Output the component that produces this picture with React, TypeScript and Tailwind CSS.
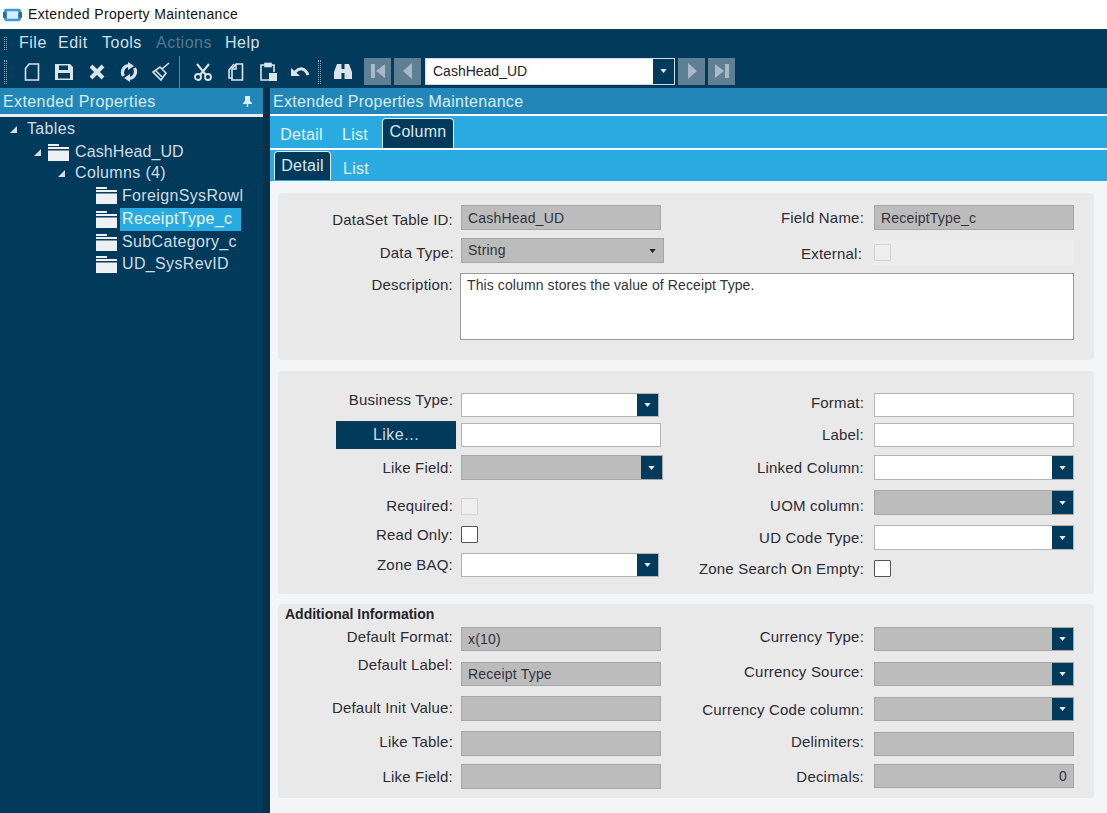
import type { ReactNode } from 'react'

const FONT = 'font-["Liberation_Sans",Arial,sans-serif]'

function Grip({ h }: { h: string }) {
  return <div className={`${h} w-[3px] border-x border-dotted border-[#8fa6b5]`} />
}

function ToolIcon({ w, children }: { w: string; children: ReactNode }) {
  return (
    <div className={`${w} flex h-[32px] shrink-0 items-center justify-center`}>
      <svg viewBox="0 0 20 20" width="20" height="20" fill="none" stroke="#dbe4ea" strokeWidth="1.6">
        {children}
      </svg>
    </div>
  )
}

function NavButton({ dir, end }: { dir: 'l' | 'r'; end?: boolean }) {
  return (
    <div className="flex h-[27px] w-[27px] shrink-0 items-center justify-center bg-[#5f7f94]">
      <svg viewBox="0 0 20 20" width="20" height="20" fill="#a9bac6">
        {dir === 'l' ? <polygon points={end ? '17,3 17,17 8,10' : '14,2 14,18 5,10'} /> : <polygon points={end ? '3,3 3,17 12,10' : '6,2 6,18 15,10'} />}
        {end && <rect x={dir === 'l' ? 3 : 13} y="3" width="4" height="14" />}
      </svg>
    </div>
  )
}

function Arrow() {
  return (
    <div className="flex h-full w-[21px] shrink-0 items-center justify-center bg-[#023a5c]">
      <svg viewBox="0 0 8 5" width="7" height="4" fill="#e6edf2">
        <polygon points="0,0 8,0 4,5" />
      </svg>
    </div>
  )
}

function TreeArrow() {
  return (
    <svg viewBox="0 0 7 7" width="7" height="7" fill="#d3dce2" className="shrink-0">
      <polygon points="7,0 7,7 0,7" />
    </svg>
  )
}

function FolderIcon() {
  return (
    <svg viewBox="0 0 21 17" width="21" height="17" fill="#eef1f3" className="shrink-0">
      <rect x="0" y="0" width="11" height="2" />
      <rect x="0" y="3" width="21" height="2" />
      <rect x="0" y="6.5" width="21" height="10.5" />
    </svg>
  )
}

function Label({ children }: { children: ReactNode }) {
  return <span className="-translate-y-[1px] whitespace-nowrap text-[15px] leading-none tracking-[0.2px] text-[#2c2c34]">{children}</span>
}

type FieldProps = {
  label: string
  w?: string
  h?: string
  value?: string
  gray?: boolean
  drop?: boolean
  right?: boolean
  className?: string
  labelClass?: string
}

function Field({ label, w = 'w-[200px]', h = 'h-[25px]', value, gray, drop, right, className = '', labelClass = 'pr-[8px]' }: FieldProps) {
  return (
    <div className={`flex items-center ${h} ${className}`}>
      <div className={`flex w-full flex-1 justify-end ${labelClass}`}>
        <Label>{label}</Label>
      </div>
      <div
        className={`flex h-full shrink-0 items-center justify-between border ${w} ${
          gray ? 'border-[#a6a6a6] bg-[#bcbcbc]' : 'border-[#b4b4b4] bg-white'
        }`}
      >
        <span className={`flex-1 px-[6px] text-[14px] leading-none tracking-[0.2px] text-[#33333b] ${right ? 'text-right' : ''}`}>{value}</span>
        {drop && <Arrow />}
      </div>
    </div>
  )
}

function Check({ label, dark, className = '', labelClass = 'pr-[8px]' }: { label: string; dark?: boolean; className?: string; labelClass?: string }) {
  return (
    <div className={`flex h-[17px] items-center ${className}`}>
      <div className={`flex flex-1 justify-end ${labelClass}`}>
        <Label>{label}</Label>
      </div>
      <div className={`h-[17px] w-[17px] shrink-0 rounded-[1px] border ${dark ? 'border-[#555] bg-white' : 'border-[#d2d2d2] bg-[#eeeeee]'}`} />
      <div className="w-[183px] shrink-0" />
    </div>
  )
}

function Tab({ children, active, w }: { children: ReactNode; active?: boolean; w: string }) {
  return (
    <div
      className={`flex h-full items-center justify-center text-[16px] tracking-[0.3px] ${w} ${
        active ? 'rounded-t-[4px] border border-b-0 border-[#dfeef6] bg-[#023a5c] text-[#dbe9f1]' : 'pt-[3px] text-[#e4f3fb]'
      }`}
    >
      {children}
    </div>
  )
}

export default function App() {
  return (
    <div className={`flex h-[813px] w-[1107px] flex-col overflow-hidden bg-white ${FONT}`}>
      {/* title bar */}
      <div className="flex h-[29px] shrink-0 items-center gap-[6px] pl-[3px] text-[14px] tracking-[0.35px] text-[#111]">
        <svg viewBox="0 0 20 14" width="19" height="14">
          <rect x="1" y="0.5" width="18" height="13" rx="2.5" fill="#3f9bd8" />
          <rect x="0" y="4" width="20" height="6" fill="#1e6fb0" />
          <rect x="4" y="3" width="12" height="8" rx="1" fill="#d8effb" />
        </svg>
        <span>Extended Property Maintenance</span>
      </div>

      {/* menu */}
      <div className="flex h-[27px] shrink-0 items-center bg-[#023a5c] pl-[4px] pt-[1px] text-[16px] tracking-[0.5px] text-[#d3e0e8]">
        <Grip h="h-[13px]" />
        <div className="ml-[12px] flex">
          <span className="w-[39px]">File</span>
          <span className="w-[44px]">Edit</span>
          <span className="w-[54px]">Tools</span>
          <span className="w-[69px] text-[#56768b]">Actions</span>
          <span>Help</span>
        </div>
      </div>

      {/* toolbar */}
      <div className="flex h-[32px] shrink-0 items-center bg-[#023a5c] pl-[4px]">
        <Grip h="h-[24px]" />
        <div className="ml-[8px] flex items-center">
          <ToolIcon w="w-[33px]">
            <path d="M7 2h9.500v16h-13V6.500z" />
          </ToolIcon>
          <ToolIcon w="w-[32px]">
            <path fill="#dbe4ea" stroke="none" d="M1 2h15l3 3v13H1zM5 3.500v4.500h9V3.500zM4 11v5.500h12V11z" />
          </ToolIcon>
          <ToolIcon w="w-[33px]">
            <path d="M4 4l12 12M16 4L4 16" strokeWidth="4" />
          </ToolIcon>
          <ToolIcon w="w-[32px]">
            <path d="M9 3.500a7 7 0 0 0-4.500 10.500M11 16.500a7 7 0 0 0 4.500-10.500" strokeWidth="3.200" />
            <path fill="#dbe4ea" stroke="none" d="M9 0l6 4-6 4zM11 20l-6-4 6-4z" />
          </ToolIcon>
          <ToolIcon w="w-[32px]">
            <path d="M11 7l7-6M9 5l6 6-5 7-8-8z" />
            <path d="M5 9l6 6" />
          </ToolIcon>
        </div>
        <div className="ml-[2px] h-[32px] w-px bg-[#5f7f94]" />
        <div className="ml-[6px] flex items-center">
          <ToolIcon w="w-[33px]">
            <circle cx="5" cy="15" r="3" strokeWidth="1.800" />
            <circle cx="15" cy="15" r="3" strokeWidth="1.800" />
            <path d="M7 13L16 2M13 13L4 2" strokeWidth="2" />
          </ToolIcon>
          <ToolIcon w="w-[33px]">
            <path d="M10 2h6.500v16H6V7z" />
            <path d="M8 2L3 8v8h3" />
            <path d="M10 2v5H6" />
          </ToolIcon>
          <ToolIcon w="w-[32px]">
            <path d="M7 3H3v15h8M13 3h3v7" />
            <rect x="7" y="1.500" width="6" height="3" fill="#dbe4ea" />
            <path fill="#dbe4ea" stroke="none" d="M11 11h8v8h-8z" />
          </ToolIcon>
          <ToolIcon w="w-[31px]">
            <path d="M5 10c5-5 10-4 13 3" strokeWidth="3" />
            <path fill="#dbe4ea" stroke="none" d="M1 6l9 8H1z" />
          </ToolIcon>
        </div>
        <div className="ml-[3px] mr-[10px]">
          <Grip h="h-[24px]" />
        </div>
        <ToolIcon w="w-[24px]">
          <path fill="#dbe4ea" stroke="none" d="M4 2h4.500v15H1v-7zM11.500 2H16l3 8v7h-7.500zM8.500 7h3v4h-3z" />
        </ToolIcon>
        <div className="mb-[2px] ml-[9px] flex items-center gap-[3px]">
          <NavButton dir="l" end />
          <NavButton dir="l" />
        </div>
        <div className="mb-[2px] ml-[4px] flex h-[27px] w-[250px] items-center border border-[#cfdbe3] bg-white">
          <span className="flex-1 pl-[7px] text-[14px] text-[#23232b]">CashHead_UD</span>
          <Arrow />
        </div>
        <div className="mb-[2px] ml-[3px] flex items-center gap-[3px]">
          <NavButton dir="r" />
          <NavButton dir="r" end />
        </div>
      </div>

      <div className="flex min-h-0 flex-1 bg-[#0a3049]">
        {/* tree panel */}
        <div className="flex w-[263px] shrink-0 flex-col bg-[#023a5c]">
          <div className="flex h-[26px] shrink-0 items-center justify-between bg-[#2287b8] pl-[3px] pr-[11px] pt-[1px] text-[16px] tracking-[0.4px] text-[#d8eef8]">
            <span>Extended Properties</span>
            <svg viewBox="0 0 9 11" width="9" height="11" fill="#d8eef8">
              <path d="M2 0h5v5l2 2v1H5.200v3H3.800V8H0V7l2-2z" />
            </svg>
          </div>
          <div className="h-[3px] shrink-0 bg-[#e8eef1]" />
          <div className="flex flex-col pt-[1px] text-[16px] leading-[22.5px] tracking-[0.35px] text-[#cfdde6]">
            <div className="flex h-[23px] items-center gap-[10px] pl-[10px]">
              <TreeArrow />
              <span>Tables</span>
            </div>
            <div className="flex h-[22px] items-center pl-[34px]">
              <TreeArrow />
              <span className="ml-[7px]"><FolderIcon /></span>
              <span className="ml-[6px] tracking-[0.1px]">CashHead_UD</span>
            </div>
            <div className="flex h-[21px] items-center gap-[10px] pl-[58px]">
              <TreeArrow />
              <span>Columns (4)</span>
            </div>
            <div className="flex h-[23.5px] items-center pl-[96px]">
              <FolderIcon />
              <span className="ml-[5px] whitespace-nowrap">ForeignSysRowl</span>
            </div>
            <div className="flex h-[23.5px] items-center pl-[96px]">
              <FolderIcon />
              <span className="ml-[3px] w-[121px] bg-[#29abe2] pl-[2px] text-[#e8f6fc]">ReceiptType_c</span>
            </div>
            <div className="flex h-[22px] items-center pl-[96px]">
              <FolderIcon />
              <span className="ml-[5px]">SubCategory_c</span>
            </div>
            <div className="flex h-[22.5px] items-center pl-[96px]">
              <FolderIcon />
              <span className="ml-[5px]">UD_SysRevID</span>
            </div>
          </div>
        </div>

        <div className="ml-[7px] flex min-w-0 flex-1 flex-col bg-[#f3f5f7]">
          <div className="flex h-[26px] shrink-0 items-center bg-[#2287b8] pl-[3px] pt-[1px] text-[16px] tracking-[0.3px] text-[#d8eef8]">Extended Properties Maintenance</div>
          <div className="h-[2px] shrink-0 bg-white" />
          <div className="flex h-[32px] shrink-0 items-stretch bg-[#29abe2] pt-[2px]">
            <Tab w="ml-[9px] w-[45px]">Detail</Tab>
            <Tab w="ml-[16px] w-[30px]">List</Tab>
            <Tab w="ml-[12px] w-[72px] pb-[3px]" active>
              Column
            </Tab>
          </div>
          <div className="h-[2px] shrink-0 bg-white" />
          <div className="flex h-[30px] shrink-0 items-stretch bg-[#29abe2] pt-[1px]">
            <Tab w="ml-[4px] w-[57px]" active>
              Detail
            </Tab>
            <Tab w="ml-[10px] mt-[2px] w-[30px]">List</Tab>
          </div>
          <div className="h-[1px] shrink-0 bg-[#29abe2]" />

          <div className="flex flex-col gap-[10px] pl-[8px] pr-[13px] pt-[12px]">
            {/* panel 1 */}
            <div className="h-[167px] rounded-[4px] bg-[#e9e9e9] pr-[20px] pt-[12px]">
              <div className="grid grid-cols-[383px_1fr]">
                <div className="flex flex-col">
                  <Field label="DataSet Table ID:" value="CashHead_UD" gray labelClass="pr-[8px] pt-[5px]" />
                  <div className="mt-[8px] flex h-[25px] items-center">
                    <div className="flex flex-1 justify-end pr-[7px] pt-[5px]">
                      <Label>Data Type:</Label>
                    </div>
                    <div className="-mr-[3px] flex h-full w-[203px] shrink-0 items-center justify-between border border-[#a6a6a6] bg-[#bcbcbc] pl-[6px] pr-[7px] text-[14px] tracking-[0.2px] text-[#33333b]">
                      String
                      <svg viewBox="0 0 8 5" width="7" height="4" fill="#222">
                        <polygon points="0,0 8,0 4,5" />
                      </svg>
                    </div>
                  </div>
                </div>
                <div className="flex flex-col">
                  <Field label="Field Name:" value="ReceiptType_c" gray labelClass="pr-[10px] pt-[2px]" />
                  <div className="mt-[10px] flex h-[25px] items-center">
                    <div className="flex flex-1 justify-end pr-[12px] pt-[3px]">
                      <Label>External:</Label>
                    </div>
                    <div className="flex h-full w-[200px] shrink-0 items-center bg-[#ededed]">
                      <div className="h-[17px] w-[17px] rounded-[1px] border border-[#d2d2d2] bg-[#eeeeee]" />
                    </div>
                  </div>
                </div>
              </div>
              <div className="mt-[8px] flex">
                <div className="flex w-[175px] shrink-0 justify-end pt-[5px]">
                  <Label>Description:</Label>
                </div>
                <div className="ml-[7px] h-[67px] flex-1 border border-[#9a9a9a] bg-white px-[6px] pt-[1px] text-[14px] tracking-[0.1px] text-[#33333b]">
                  This column stores the value of Receipt Type.
                </div>
              </div>
            </div>

            {/* panel 2 */}
            <div className="mt-[1px] grid h-[223px] grid-cols-[383px_1fr] rounded-[4px] bg-[#e9e9e9] pr-[20px] pt-[22px]">
              <div className="flex flex-col">
                <Field label="Business Type:" w="mr-[2px] w-[198px]" drop h="h-[24px]" labelClass="pr-[8px] pb-[10px]" />
                <div className="mt-[4px] flex h-[28px] items-center">
                  <div className="ml-[58px] flex h-[28px] w-[120px] items-center justify-center bg-[#023a5c] text-[16px] tracking-[0.5px] text-[#c9dbe6]">Like...</div>
                  <div className="ml-[5px] h-[24px] w-[200px] border border-[#b4b4b4] bg-white" />
                </div>
                <Field label="Like Field:" w="-mr-[2px] w-[202px]" gray drop className="mt-[6px]" labelClass="pr-[8px] pt-[2px]" />
                <Check label="Required:" className="mt-[18px]" />
                <Check label="Read Only:" dark className="mt-[11px]" labelClass="pr-[8px] pt-[2px]" />
                <Field label="Zone BAQ:" w="mr-[2px] w-[198px]" drop h="h-[24px]" className="mt-[10px]" />
              </div>
              <div className="flex flex-col">
                <Field label="Format:" h="h-[24px]" labelClass="pr-[10px] pb-[4px]" />
                <Field label="Label:" h="h-[24px]" className="mt-[6px]" labelClass="pr-[10px]" />
                <Field label="Linked Column:" drop className="mt-[8px]" labelClass="pr-[10px] pt-[2px]" />
                <Field label="UOM column:" gray drop className="mt-[10px]" labelClass="pr-[10px] pt-[7px]" />
                <Field label="UD Code Type:" drop className="mt-[10px]" labelClass="pr-[10px] pt-[2px]" />
                <Check label="Zone Search On Empty:" dark className="mt-[10px]" labelClass="pr-[10px] pt-[2px]" />
              </div>
            </div>

            {/* panel 3 */}
            <div className="h-[194px] rounded-[4px] bg-[#e9e9e9] pr-[20px]">
              <div className="h-[23px] pl-[7px] text-[14px] font-bold leading-[20px] text-[#23232b]">Additional Information</div>
              <div className="grid grid-cols-[383px_1fr]">
                <div className="flex flex-col">
                  <Field label="Default Format:" value="x(10)" gray h="h-[24px]" labelClass="pr-[8px] pb-[4px]" />
                  <Field label="Default Label:" value="Receipt Type" gray h="h-[24px]" className="mt-[11px]" labelClass="pr-[8px] pb-[18px]" />
                  <Field label="Default Init Value:" gray className="mt-[10px]" />
                  <Field label="Like Table:" gray className="mt-[10px]" labelClass="pr-[8px] pb-[3px]" />
                  <Field label="Like Field:" gray className="mt-[8px]" labelClass="pr-[8px] pt-[2px]" />
                </div>
                <div className="flex flex-col">
                  <Field label="Currency Type:" gray drop h="h-[24px]" labelClass="pr-[10px] pb-[4px]" />
                  <Field label="Currency Source:" gray drop h="h-[24px]" className="mt-[11px]" labelClass="pr-[10px] pb-[3px]" />
                  <Field label="Currency Code column:" gray drop h="h-[24px]" className="mt-[11px]" labelClass="pr-[10px] pt-[3px]" />
                  <Field label="Delimiters:" gray h="h-[24px]" className="mt-[11px]" labelClass="pr-[10px] pb-[3px]" />
                  <Field label="Decimals:" value="0" right gray h="h-[24px]" className="mt-[8px]" labelClass="pr-[10px] pt-[3px]" />
                </div>
              </div>
            </div>
          </div>
        </div>
      </div>
    </div>
  )
}
